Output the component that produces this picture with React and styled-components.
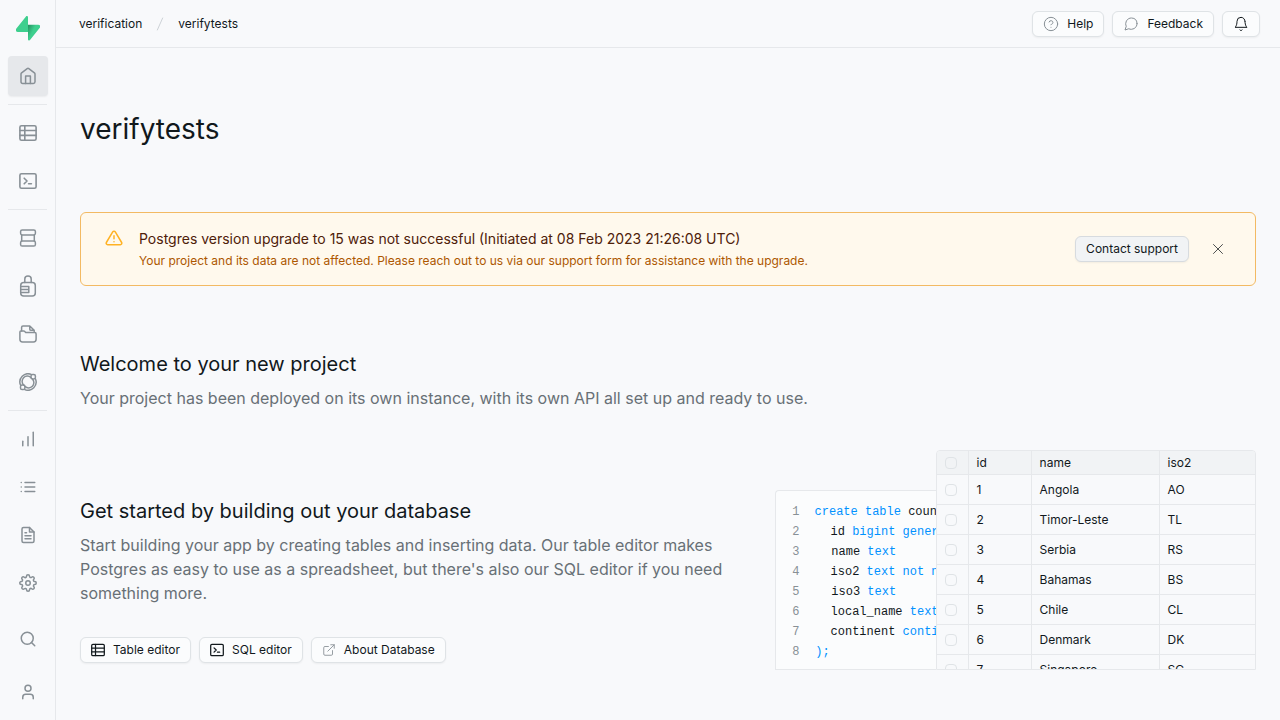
import React from "react";
import styled, { createGlobalStyle, css } from "styled-components";
import {
  FiAlertTriangle,
  FiBell,
  FiExternalLink,
  FiFileText,
  FiHelpCircle,
  FiList,
  FiMessageCircle,
  FiSearch,
  FiSettings,
  FiX,
} from "react-icons/fi";
import { ChartNoAxesColumnIncreasing, User } from "lucide-react";

const color = {
  page: "#f8f9fb",
  panel: "#fbfcfd",
  header: "#f1f3f5",
  line: "#e6e8eb",
  text: "#11181c",
  light: "#687076",
  icon: "#889096",
  code: "#0091ff",
};

const GlobalStyle = createGlobalStyle`
  *, *::before, *::after { box-sizing: border-box; }
  body {
    margin: 0;
    background: ${color.page};
    color: ${color.text};
    font-family: Inter, "Liberation Sans", sans-serif;
    font-size: 12px;
    line-height: 16px;
  }
  h1, h2, p, ul, ol { margin: 0; padding: 0; font-weight: 400; }
  ul, ol { list-style: none; }
  svg { display: block; flex: none; }
`;

const Shell = styled.div`
  display: flex;
  min-height: 100vh;
`;

const Sidebar = styled.nav`
  display: flex;
  flex: none;
  flex-direction: column;
  width: 56px;
  min-height: 100vh;
  padding: 16px 8px 8px;
  border-right: 1px solid ${color.line};
`;

const LogoLink = styled.a`
  display: flex;
  justify-content: center;
  width: 40px;
  height: 24px;
  margin-bottom: 16px;
`;

const NavGroup = styled.ul`
  display: flex;
  flex-direction: column;
  gap: 8px;
  ${(p) =>
    p.$divided &&
    css`
      margin-top: 8px;
      padding-top: 8px;
      border-top: 1px solid ${color.line};
    `}
  ${(p) =>
    p.$bottom &&
    css`
      gap: 13px;
      margin-top: auto;
      padding-top: 16px;
    `}
`;

const NavLink = styled.a`
  display: flex;
  align-items: center;
  justify-content: center;
  width: 40px;
  height: 40px;
  border-radius: 4px;
  color: ${color.icon};
  background: ${(p) => (p.$active ? "#e6e8eb" : "transparent")};
  box-shadow: ${(p) => (p.$active ? "0 1px 2px rgba(0, 0, 0, 0.06)" : "none")};
`;

const Page = styled.div`
  flex: 1;
  min-width: 0;
`;

const TopBar = styled.header`
  display: flex;
  align-items: center;
  justify-content: space-between;
  height: 48px;
  padding: 0 20px 0 23px;
  border-bottom: 1px solid ${color.line};
`;

const Crumbs = styled.ol`
  display: flex;
  align-items: center;
  gap: 10px;
`;

const Crumb = styled.li`
  display: flex;
  align-items: center;
  color: ${(p) => (p.$divider ? "#c1c8cd" : color.text)};

  a {
    color: inherit;
    text-decoration: none;
  }
`;

const ButtonRow = styled.div`
  display: flex;
  gap: 8px;
`;

const Button = styled.button`
  display: inline-flex;
  align-items: center;
  gap: 8px;
  height: 26px;
  padding: 0 10px;
  border: 1px solid ${(p) => (p.$muted ? "#d7dbdf" : "#dfe3e6")};
  border-radius: 6px;
  background: ${(p) => (p.$muted ? color.header : color.panel)};
  box-shadow: 0 1px 2px rgba(0, 0, 0, 0.05);
  color: ${color.text};
  font: inherit;
  white-space: nowrap;

  svg {
    color: ${(p) => (p.$darkIcon ? color.text : color.icon)};
  }
`;

const CloseButton = styled.button`
  display: flex;
  align-items: center;
  justify-content: center;
  width: 26px;
  height: 26px;
  padding: 0;
  border: 0;
  background: transparent;
  color: ${color.text};
`;

const Main = styled.main`
  padding: 63px 24px 50px;
`;

const Title = styled.h1`
  font-size: 28px;
  line-height: 36px;
`;

const Alert = styled.section`
  display: flex;
  align-items: center;
  gap: 16px;
  margin-top: 65px;
  padding: 16px 24px;
  border: 1px solid #f3ba63;
  border-radius: 6px;
  background: #fff9ed;

  > svg {
    align-self: flex-start;
    color: #ffb224;
  }
`;

const AlertText = styled.div`
  flex: 1;
  min-width: 0;
`;

const AlertTitle = styled.p`
  margin-bottom: 4px;
  color: #4e2009;
  font-size: 14px;
  line-height: 20px;
`;

const AlertNote = styled.p`
  color: #ad5700;
`;

const Welcome = styled.section`
  margin-top: 64px;
`;

const Heading = styled.h2`
  margin-bottom: 8px;
  font-size: 20px;
  line-height: 28px;
`;

const Lead = styled.p`
  color: ${color.light};
  font-size: 16px;
  line-height: 24px;
`;

const GetStarted = styled.section`
  display: grid;
  grid-template-columns: repeat(12, minmax(0, 1fr));
  column-gap: 16px;
  margin-top: 40px;
`;

const Intro = styled.div`
  grid-column: span 7;
  padding: 47px 32px 0 0;

  ${ButtonRow} {
    margin-top: 32px;
  }
`;

const Preview = styled.div`
  display: grid;
  grid-column: span 5;
  grid-template-columns: minmax(0, 1fr) minmax(0, 2fr);
  height: 220px;
`;

const CodePane = styled.ol`
  margin-top: 40px;
  padding: 11px 0 0 16px;
  overflow: hidden;
  border: 1px solid ${color.line};
  border-right: 0;
  border-radius: 4px 0 0 0;
  background: ${color.panel};
  font-family: "Liberation Mono", monospace;
  white-space: pre;
`;

const CodeLine = styled.li`
  display: flex;
  gap: 15px;
  line-height: 20px;

  code {
    padding-left: ${(p) => (p.$indent ? "16px" : "0")};
    font: inherit;
  }
`;

const LineNumber = styled.span`
  width: 8px;
  color: ${color.icon};
`;

const Keyword = styled.span`
  color: ${color.code};
`;

const TablePane = styled.div`
  overflow: hidden;
  border: 1px solid ${color.line};
  border-radius: 4px 4px 0 0;
  background: ${color.page};
`;

const DataTable = styled.table`
  width: 100%;
  border-spacing: 0;
  table-layout: fixed;
`;

const Cell = styled.td`
  height: ${(p) => (p.$head ? "24px" : "30px")};
  padding: 0 8px;
  border-right: 1px solid ${color.line};
  border-bottom: 1px solid ${color.line};
  background: ${(p) => (p.$head ? color.header : "transparent")};
  font-weight: 400;
  text-align: left;

  &:last-child {
    border-right: 0;
  }
`;

const CheckBox = styled.input.attrs({ type: "checkbox" })`
  display: block;
  width: 12px;
  height: 12px;
  margin: 0;
  border: 1px solid #dfe3e6;
  border-radius: 4px;
  appearance: none;
`;

function Glyph({ size = 18, width = 1.5, children }) {
  return (
    <svg
      width={size}
      height={size}
      viewBox="0 0 18 18"
      fill="none"
      stroke="currentColor"
      strokeWidth={width}
      strokeLinecap="round"
      strokeLinejoin="round"
      aria-hidden="true"
    >
      {children}
    </svg>
  );
}

const HomeIcon = () => (
  <Glyph>
    <path d="M2 7.1 Q2 6.3 2.6 5.8 L8.2 1.6 Q9 1 9.8 1.6 L15.4 5.8 Q16 6.3 16 7.1 V14.8 Q16 16.5 14.3 16.5 H3.7 Q2 16.5 2 14.8 Z" />
    <path d="M6.6 16.4 V8.9 H11.4 V16.4" />
  </Glyph>
);

const TableIcon = (props) => (
  <Glyph width={1.6} {...props}>
    <rect x="0.9" y="1.75" width="16.2" height="14.5" rx="1.6" />
    <path d="M1 6.5 H17 M1 11.4 H17 M5.8 1.9 V16.1" />
  </Glyph>
);

const SqlIcon = (props) => (
  <Glyph width={1.6} {...props}>
    <rect x="0.9" y="1.75" width="16.2" height="14.5" rx="1.6" />
    <path d="M5.2 6.2 L8 9 L5.2 11.8 M9.6 11.8 H12.4" />
  </Glyph>
);

const DatabaseIcon = () => (
  <Glyph width={1.5}>
    <rect x="1.6" y="0.9" width="14.8" height="5" rx="1.6" />
    <rect x="1.6" y="12.1" width="14.8" height="5" rx="1.6" />
    <path d="M2.7 6 V12 M15.3 6 V12" />
  </Glyph>
);

const LockIcon = () => (
  <svg width="18" height="22" viewBox="0 0 18 22" fill="none" stroke="currentColor" strokeWidth="1.5" strokeLinecap="round" strokeLinejoin="round" aria-hidden="true">
    <path d="M5.8 7.4 V3.9 Q5.8 0.9 9 0.9 Q12.2 0.9 12.2 3.9 V7.4" />
    <rect x="1.7" y="7.4" width="14.6" height="13.6" rx="3" />
    <path d="M1.8 11.4 H9.8 V17.6 H1.8 M1.8 14.5 H9.8" />
  </svg>
);

const StorageIcon = () => (
  <Glyph width={1.5}>
    <path d="M2.6 6 V2.4 Q2.6 1 4 1 H10.8 L15.2 5.3 V6.5 M10.8 1 V4.2 Q10.8 5.3 12 5.3 H15.2" />
    <path d="M0.9 7 Q0.9 5.9 1.9 5.9 H4.6 Q5.3 5.9 5.8 6.5 L6.7 7.5 H15.8 Q17.1 7.5 17.1 8.9 V14.3 Q17.1 17 14.5 17 H3.5 Q0.9 17 0.9 14.3 Z" />
  </Glyph>
);

const FunctionsIcon = () => (
  <Glyph width={1.5}>
    <path d="M12.2 1.4 A8.2 8.2 0 0 0 1.6 12.3 M5.8 16.6 A8.2 8.2 0 0 0 16.4 5.7" />
    <path d="M12 4.6 A5.2 5.2 0 0 0 4.7 12.1 M6 13.4 A5.2 5.2 0 0 0 13.3 5.9" />
    <rect x="12" y="1.5" width="4.4" height="4.4" rx="1.6" />
    <rect x="1.5" y="12.1" width="4.4" height="4.4" rx="1.6" />
  </Glyph>
);

const Logo = () => (
  <svg width="24" height="25" viewBox="0 0 24 25" aria-hidden="true">
    <defs>
      <linearGradient id="bolt" x1="12" y1="10" x2="18" y2="13" gradientUnits="userSpaceOnUse">
        <stop stopColor="#249361" />
        <stop offset="1" stopColor="#3ecf8e" />
      </linearGradient>
    </defs>
    <path d="M14 24.1 C13.4 24.9 12.1 24.4 12 23.4 V8.7 H22.2 C24 8.7 24.9 10.5 23.8 11.7 Z" fill="url(#bolt)" />
    <path d="M10 0.5 C10.6 -0.3 12 0.2 12 1.2 V15.9 H1.8 C0 15.9 -0.9 14.1 0.2 12.7 Z" fill="#3ecf8e" />
  </svg>
);

const navGroups = [
  [{ label: "Home", icon: <HomeIcon />, active: true }],
  [
    { label: "Table editor", icon: <TableIcon /> },
    { label: "SQL editor", icon: <SqlIcon /> },
  ],
  [
    { label: "Database", icon: <DatabaseIcon /> },
    { label: "Authentication", icon: <LockIcon /> },
    { label: "Storage", icon: <StorageIcon /> },
    { label: "Edge functions", icon: <FunctionsIcon /> },
  ],
  [
    { label: "Reports", icon: <ChartNoAxesColumnIncreasing size={18} /> },
    { label: "Logs", icon: <FiList size={18} /> },
    { label: "API docs", icon: <FiFileText size={18} /> },
    { label: "Settings", icon: <FiSettings size={18} /> },
  ],
];

const bottomNav = [
  { label: "Search", icon: <FiSearch size={18} /> },
  { label: "Account", icon: <User size={18} /> },
];

const codeLines = [
  [["create table", true], [" countries"]],
  [["id "], ["bigint generated", true]],
  [["name "], ["text", true]],
  [["iso2 "], ["text not null", true]],
  [["iso3 "], ["text", true]],
  [["local_name "], ["text", true]],
  [["continent "], ["continents", true]],
  [[");", true]],
];

const countries = [
  ["Angola", "AO"],
  ["Timor-Leste", "TL"],
  ["Serbia", "RS"],
  ["Bahamas", "BS"],
  ["Chile", "CL"],
  ["Denmark", "DK"],
  ["Singapore", "SG"],
];

function NavItems({ items }) {
  return items.map((item) => (
    <li key={item.label}>
      <NavLink href="#" aria-label={item.label} $active={item.active}>
        {item.icon}
      </NavLink>
    </li>
  ));
}

export default function App() {
  return (
    <Shell>
      <GlobalStyle />
      <Sidebar aria-label="Project">
        <LogoLink href="#" aria-label="Projects">
          <Logo />
        </LogoLink>
        {navGroups.map((items, i) => (
          <NavGroup key={i} $divided={i > 0}>
            <NavItems items={items} />
          </NavGroup>
        ))}
        <NavGroup $bottom>
          <NavItems items={bottomNav} />
        </NavGroup>
      </Sidebar>

      <Page>
        <TopBar>
          <Crumbs>
            <Crumb><a href="#">verification</a></Crumb>
            <Crumb $divider aria-hidden="true">
              <svg width="16" height="16" viewBox="0 0 24 24" fill="none" stroke="currentColor" strokeWidth="1.2" strokeLinecap="round">
                <path d="M16 3 L8 21" />
              </svg>
            </Crumb>
            <Crumb><a href="#">verifytests</a></Crumb>
          </Crumbs>
          <ButtonRow>
            <Button type="button"><FiHelpCircle size={16} strokeWidth={1.5} />Help</Button>
            <Button type="button"><FiMessageCircle size={16} strokeWidth={1.5} />Feedback</Button>
            <Button type="button" aria-label="Notifications" $darkIcon><FiBell size={16} strokeWidth={1.5} /></Button>
          </ButtonRow>
        </TopBar>

        <Main>
          <Title>verifytests</Title>

          <Alert>
            <FiAlertTriangle size={18} strokeWidth={2} />
            <AlertText>
              <AlertTitle>
                Postgres version upgrade to 15 was not successful (Initiated at 08 Feb 2023 21:26:08 UTC)
              </AlertTitle>
              <AlertNote>
                Your project and its data are not affected. Please reach out to us via our support form for assistance with the upgrade.
              </AlertNote>
            </AlertText>
            <Button type="button" $muted>Contact support</Button>
            <CloseButton type="button" aria-label="Dismiss"><FiX size={18} strokeWidth={1} /></CloseButton>
          </Alert>

          <Welcome>
            <Heading>Welcome to your new project</Heading>
            <Lead>
              Your project has been deployed on its own instance, with its own API all set up and ready to use.
            </Lead>
          </Welcome>

          <GetStarted>
            <Intro>
              <Heading>Get started by building out your database</Heading>
              <Lead>
                Start building your app by creating tables and inserting data. Our table editor makes Postgres as
                easy to use as a spreadsheet, but there's also our SQL editor if you need something more.
              </Lead>
              <ButtonRow>
                <Button type="button" $darkIcon><TableIcon size={14} />Table editor</Button>
                <Button type="button" $darkIcon><SqlIcon size={14} />SQL editor</Button>
                <Button type="button"><FiExternalLink size={14} strokeWidth={1.5} />About Database</Button>
              </ButtonRow>
            </Intro>

            <Preview>
              <CodePane>
                {codeLines.map((parts, i) => (
                  <CodeLine key={i} $indent={i > 0 && i < codeLines.length - 1}>
                    <LineNumber>{i + 1}</LineNumber>
                    <code>
                      {parts.map(([text, keyword]) =>
                        keyword ? <Keyword key={text}>{text}</Keyword> : text
                      )}
                    </code>
                  </CodeLine>
                ))}
              </CodePane>
              <TablePane>
                <DataTable>
                  <colgroup>
                    <col style={{ width: "32px" }} />
                    <col style={{ width: "63px" }} />
                    <col style={{ width: "128px" }} />
                    <col />
                  </colgroup>
                  <thead>
                    <tr>
                      <Cell as="th" $head><CheckBox aria-label="Select all rows" /></Cell>
                      <Cell as="th" $head>id</Cell>
                      <Cell as="th" $head>name</Cell>
                      <Cell as="th" $head>iso2</Cell>
                    </tr>
                  </thead>
                  <tbody>
                    {countries.map(([name, iso2], i) => (
                      <tr key={name}>
                        <Cell><CheckBox aria-label={`Select ${name}`} /></Cell>
                        <Cell>{i + 1}</Cell>
                        <Cell>{name}</Cell>
                        <Cell>{iso2}</Cell>
                      </tr>
                    ))}
                  </tbody>
                </DataTable>
              </TablePane>
            </Preview>
          </GetStarted>
        </Main>
      </Page>
    </Shell>
  );
}
